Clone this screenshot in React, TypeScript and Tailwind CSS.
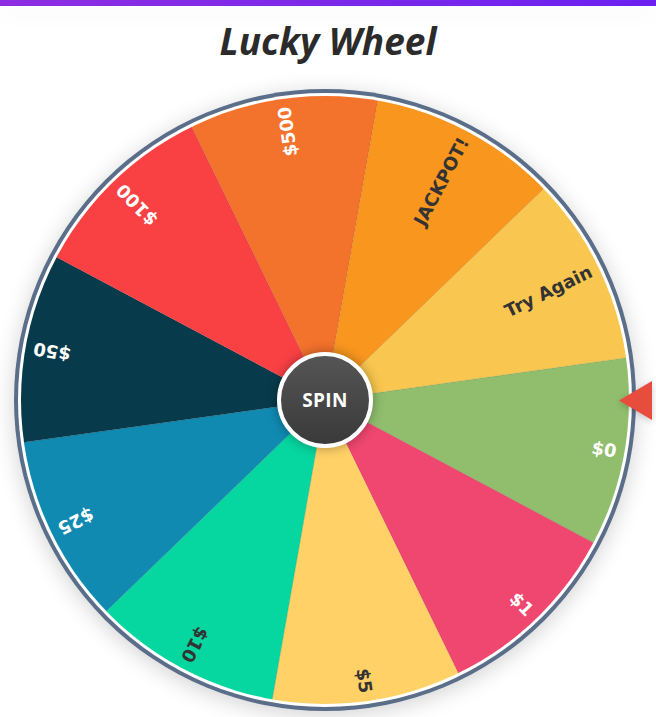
import React from "react";

type Seg = { label: string; color: string; text: string };

const SEGMENTS: Seg[] = [
  { label: "$0", color: "#90be6d", text: "#ffffff" },
  { label: "$1", color: "#ef476f", text: "#ffffff" },
  { label: "$5", color: "#ffd166", text: "#333333" },
  { label: "$10", color: "#06d6a0", text: "#333333" },
  { label: "$25", color: "#118ab2", text: "#ffffff" },
  { label: "$50", color: "#073b4c", text: "#ffffff" },
  { label: "$100", color: "#f94144", text: "#ffffff" },
  { label: "$500", color: "#f3722c", text: "#ffffff" },
  { label: "JACKPOT!", color: "#f8961e", text: "#333333" },
  { label: "Try Again", color: "#f9c74f", text: "#333333" },
];

const C = 304;
const R = 304;
const OFFSET = -8;

function pt(angleDeg: number, r: number) {
  const a = (angleDeg * Math.PI) / 180;
  return [C + r * Math.cos(a), C + r * Math.sin(a)];
}

function Wheel() {
  const step = 360 / SEGMENTS.length;
  return (
    <svg width={608} height={608} viewBox="0 0 608 608" className="block rounded-full">
      {SEGMENTS.map((s, i) => {
        const a0 = OFFSET + i * step;
        const a1 = a0 + step;
        const [x0, y0] = pt(a0, R + 2);
        const [x1, y1] = pt(a1, R + 2);
        return (
          <path
            key={s.label}
            d={`M ${C} ${C} L ${x0} ${y0} A ${R + 2} ${R + 2} 0 0 1 ${x1} ${y1} Z`}
            fill={s.color}
            stroke="rgba(0,0,0,0.07)"
            strokeWidth={1}
          />
        );
      })}
      {SEGMENTS.map((s, i) => {
        const mid = OFFSET + i * step + step / 2;
        return (
          <text
            key={s.label + "t"}
            x={C + 296}
            y={C}
            dy="0.36em"
            textAnchor="end"
            transform={`rotate(${mid} ${C} ${C})`}
            fill={s.text}
            style={{ fontFamily: '"DejaVu Sans", sans-serif', fontWeight: 700, fontSize: 18 }}
          >
            {s.label}
          </text>
        );
      })}
    </svg>
  );
}

export default function App() {
  return (
    <div className="min-h-screen w-full bg-white overflow-hidden">
      <div className="h-[6px] w-full bg-gradient-to-r from-[#8e2de2] to-[#6b1ff0] shadow-[0_6px_24px_rgba(0,0,0,0.06)]" />
      <h1
        className="mt-[11px] text-center text-[37px] leading-[48px] font-bold italic text-[#2b2b2b]"
        style={{ fontFamily: '"Open Sans", "Noto Sans", sans-serif' }}
      >
        Lucky Wheel
      </h1>
      <div className="relative ml-[14px] mt-[24px] w-[622px] h-[622px]">
        <div className="w-[622px] h-[622px] rounded-full bg-[#5a6d89] p-[4px] shadow-[0_4px_22px_rgba(0,0,0,0.18)]">
          <div className="w-full h-full rounded-full bg-white p-[3px]">
            <Wheel />
          </div>
        </div>
        <div className="absolute left-1/2 top-1/2 -translate-x-1/2 -translate-y-1/2 w-[96px] h-[96px] rounded-full border-[4px] border-white bg-gradient-to-b from-[#555555] to-[#3a3a3a] shadow-[0_0_12px_rgba(0,0,0,0.35)] flex items-center justify-center">
          <span
            className="text-white text-[19px] font-bold tracking-[0.3px]"
            style={{ fontFamily: '"Open Sans", "Noto Sans", sans-serif' }}
          >
            SPIN
          </span>
        </div>
        <svg
          className="absolute left-[605px] top-[292px] drop-shadow-[0_2px_3px_rgba(0,0,0,0.2)]"
          width={33}
          height={39}
          viewBox="0 0 33 39"
        >
          <polygon points="0,19.5 33,0 33,39" fill="#e74c3c" />
        </svg>
      </div>
    </div>
  );
}
